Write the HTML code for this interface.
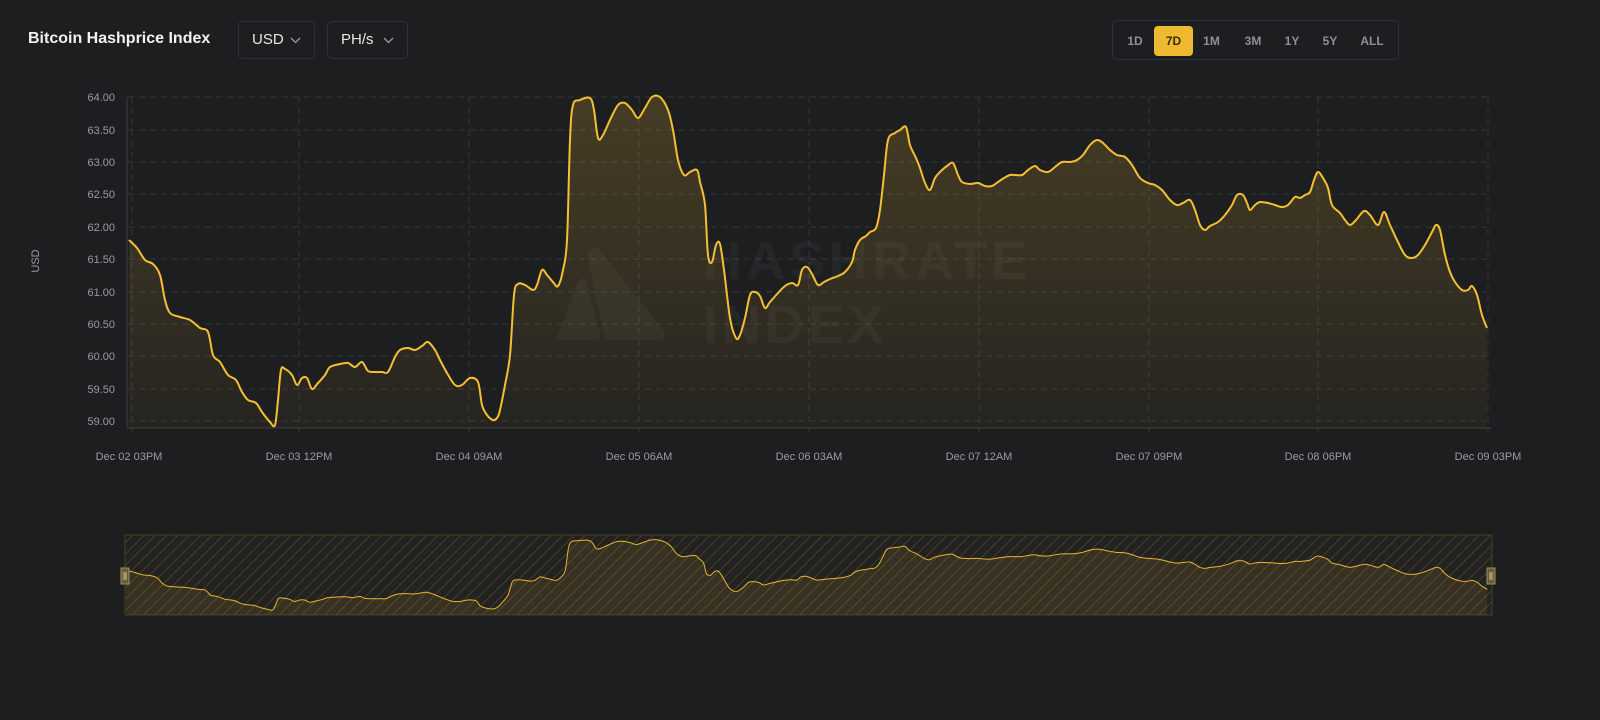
<!DOCTYPE html>
<html><head><meta charset="utf-8"><style>
body{margin:0;width:1600px;height:720px;background:#1d1e20;font-family:"Liberation Sans",sans-serif;overflow:hidden;position:relative;color:#fff}
.title{position:absolute;left:28px;top:30px;font-size:16px;font-weight:bold;color:#f2f2f2}
.dd{position:absolute;top:21px;height:38px;border:1px solid #303236;border-radius:5px;box-sizing:border-box;font-size:15px;color:#e6e6e6;line-height:36px;padding-left:13px}
.dd svg{position:absolute;top:15px}
.rng{position:absolute;left:1112px;top:20px;width:287px;height:40px;border:1px solid #303236;border-radius:5px;box-sizing:border-box}
.rng span{position:absolute;top:5px;height:30px;line-height:30px;font-size:12px;font-weight:bold;color:#8d9098;text-align:center}
.rng .on{background:#f0b932;color:#3a2d0a;border-radius:4px;width:39px}
</style></head><body>
<div class="title">Bitcoin Hashprice Index</div>
<div class="dd" style="left:238px;width:77px">USD<svg style="left:51px" width="11" height="7"><path d="M1 1l4.5 4.5L10 1" stroke="#9a9ca2" stroke-width="1.3" fill="none"/></svg></div>
<div class="dd" style="left:327px;width:81px">PH/s<svg style="left:55px" width="11" height="7"><path d="M1 1l4.5 4.5L10 1" stroke="#9a9ca2" stroke-width="1.3" fill="none"/></svg></div>
<div class="rng">
<span style="left:10px;width:24px">1D</span>
<span class="on" style="left:41px">7D</span>
<span style="left:86px;width:25px">1M</span>
<span style="left:126px;width:28px">3M</span>
<span style="left:168px;width:22px">1Y</span>
<span style="left:205px;width:24px">5Y</span>
<span style="left:244px;width:30px">ALL</span>
</div>
<svg width="1600" height="720" style="position:absolute;left:0;top:0" font-family="Liberation Sans, sans-serif">
<defs>
<linearGradient id="g" x1="0" y1="0" x2="0" y2="1"><stop offset="0" stop-color="#f0b932" stop-opacity="0.2"/><stop offset="1" stop-color="#f0b932" stop-opacity="0.04"/></linearGradient>
<pattern id="h" width="8" height="8" patternUnits="userSpaceOnUse" patternTransform="rotate(45)"><rect width="8" height="8" fill="#222"/><line x1="0" y1="0" x2="0" y2="8" stroke="#5e5028" stroke-width="1.2"/></pattern>
<path id="ln" d="M129,240 L137,248 L145,260 L153,264 L160,275 L165,300 L170,313 L180,317 L190,320 L200,328 L208,332 L213,355 L220,362 L228,375 L236,380 L242,392 L248,400 L256,403 L262,412 L270,422 L275,425 L278,400 L281,370 L285,369 L292,375 L297,385 L302,378 L307,378 L312,389 L318,383 L325,375 L330,367 L340,364 L348,363 L355,367 L362,362 L368,371 L375,372 L382,372 L388,372 L395,357 L400,350 L408,348 L415,350 L422,346 L428,342 L435,350 L440,360 L447,373 L455,385 L462,385 L470,378 L478,382 L482,405 L487,415 L493,420 L497,418 L500,410 L505,385 L510,355 L514,295 L518,284 L525,285 L533,290 L537,285 L542,270 L547,275 L553,282 L558,286 L563,270 L567,240 L570,140 L573,105 L580,100 L590,98 L594,110 L598,138 L603,135 L610,120 L618,105 L625,103 L632,110 L638,118 L645,108 L652,97 L660,97 L668,110 L673,130 L678,160 L684,175 L690,172 L697,170 L700,182 L705,205 L708,255 L712,262 L716,245 L720,244 L724,270 L730,318 L736,338 L740,335 L745,318 L750,295 L755,292 L760,296 L765,308 L770,302 L778,293 L785,286 L792,283 L798,285 L802,270 L807,267 L812,274 L818,285 L824,282 L830,279 L838,276 L845,272 L852,262 L855,250 L860,240 L866,236 L870,232 L876,228 L880,210 L884,175 L888,140 L895,133 L900,130 L906,127 L910,145 L916,158 L920,168 L925,183 L930,190 L935,178 L940,172 L947,166 L953,163 L958,175 L962,182 L970,184 L978,183 L985,186 L992,186 L998,182 L1004,178 L1010,175 L1015,175 L1022,175 L1028,170 L1035,166 L1040,170 L1048,172 L1055,167 L1062,162 L1070,162 L1077,160 L1083,155 L1090,145 L1097,140 L1103,143 L1110,150 L1117,155 L1125,157 L1132,165 L1140,178 L1148,183 L1155,185 L1162,190 L1170,200 L1177,205 L1183,203 L1190,200 L1195,210 L1200,225 L1205,230 L1210,226 L1218,222 L1225,215 L1232,205 L1237,195 L1243,195 L1247,203 L1250,210 L1255,205 L1260,202 L1268,203 L1275,205 L1282,207 L1288,205 L1295,197 L1300,198 L1305,195 L1310,192 L1314,180 L1318,172 L1323,178 L1328,188 L1332,205 L1340,213 L1345,220 L1350,225 L1356,220 L1364,211 L1370,215 L1378,225 L1384,212 L1390,225 L1397,240 L1405,255 L1412,258 L1418,255 L1425,245 L1432,232 L1436,225 L1440,230 L1445,255 L1450,272 L1455,282 L1462,290 L1468,290 L1472,286 L1477,295 L1482,315 L1487,328"/>
</defs>
<g stroke="#333538" stroke-dasharray="6 5" stroke-width="1">
<line x1="128" y1="97" x2="1490" y2="97"/><line x1="128" y1="130" x2="1490" y2="130"/><line x1="128" y1="162" x2="1490" y2="162"/><line x1="128" y1="194" x2="1490" y2="194"/><line x1="128" y1="227" x2="1490" y2="227"/><line x1="128" y1="259" x2="1490" y2="259"/><line x1="128" y1="292" x2="1490" y2="292"/><line x1="128" y1="324" x2="1490" y2="324"/><line x1="128" y1="356" x2="1490" y2="356"/><line x1="128" y1="389" x2="1490" y2="389"/><line x1="128" y1="421" x2="1490" y2="421"/>
<line x1="132" y1="97" x2="132" y2="434"/><line x1="299" y1="97" x2="299" y2="434"/><line x1="469" y1="97" x2="469" y2="434"/><line x1="639" y1="97" x2="639" y2="434"/><line x1="809" y1="97" x2="809" y2="434"/><line x1="979" y1="97" x2="979" y2="434"/><line x1="1149" y1="97" x2="1149" y2="434"/><line x1="1318" y1="97" x2="1318" y2="434"/><line x1="1488" y1="97" x2="1488" y2="434"/>
</g>
<line x1="127" y1="97" x2="127" y2="428" stroke="#3a3c40"/>
<line x1="127" y1="428" x2="1492" y2="428" stroke="#3a3c40"/>
<g fill="#9a9ca2" font-size="11" text-anchor="end">
<text x="115" y="101">64.00</text><text x="115" y="134">63.50</text><text x="115" y="166">63.00</text><text x="115" y="198">62.50</text><text x="115" y="231">62.00</text><text x="115" y="263">61.50</text><text x="115" y="296">61.00</text><text x="115" y="328">60.50</text><text x="115" y="360">60.00</text><text x="115" y="393">59.50</text><text x="115" y="425">59.00</text>
</g>
<text x="39" y="261" fill="#9a9ca2" font-size="11" transform="rotate(-90 39 261)" text-anchor="middle">USD</text>
<g fill="#9a9ca2" font-size="11" text-anchor="middle">
<text x="129" y="460">Dec 02 03PM</text><text x="299" y="460">Dec 03 12PM</text><text x="469" y="460">Dec 04 09AM</text><text x="639" y="460">Dec 05 06AM</text><text x="809" y="460">Dec 06 03AM</text><text x="979" y="460">Dec 07 12AM</text><text x="1149" y="460">Dec 07 09PM</text><text x="1318" y="460">Dec 08 06PM</text><text x="1488" y="460">Dec 09 03PM</text>
</g>
<g fill="#ffffff" fill-opacity="0.04">
<path d="M558,334 L578,282 Q582,274 586,282 L600,334 Q601,340 594,340 L563,340 Q556,340 558,334Z"/>
<path d="M587,256 Q590,244 600,250 L663,330 Q669,340 658,340 L612,340 Q606,340 604,334Z"/>
<text x="703" y="279" font-size="54" font-weight="bold" letter-spacing="4">HASHRATE</text>
<text x="703" y="343" font-size="54" font-weight="bold" letter-spacing="4">INDEX</text>
</g>
<path id="area" fill="url(#g)" d=""/>
<path id="line" fill="none" stroke="#f4bf33" stroke-width="2" stroke-linejoin="round" d=""/>
<rect x="125" y="535" width="1367" height="80" fill="url(#h)" stroke="#4a3f22"/>
<g id="mini" transform="translate(-3,519.3) scale(1.0022,0.2134)"></g>
<rect x="121" y="568" width="8" height="16" fill="#6b5a2a" stroke="#9a8f70"/>
<line x1="124" y1="572" x2="124" y2="580" stroke="#ccc"/><line x1="126" y1="572" x2="126" y2="580" stroke="#ccc"/>
<rect x="1487" y="568" width="8" height="16" fill="#6b5a2a" stroke="#9a8f70"/>
<line x1="1490" y1="572" x2="1490" y2="580" stroke="#ccc"/><line x1="1492" y1="572" x2="1492" y2="580" stroke="#ccc"/>
</svg>
<script>
var raw=document.getElementById('ln').getAttribute('d');
var pts=raw.replace(/[ML]/g,'').trim().split(/\s+/).map(function(s){return s.split(',').map(Number);});
var d='M'+pts[0][0]+','+pts[0][1];
for(var i=0;i<pts.length-1;i++){
 var p0=pts[i-1]||pts[i],p1=pts[i],p2=pts[i+1],p3=pts[i+2]||p2;
 var t=0.5/3;
 var c1x=p1[0]+(p2[0]-p0[0])*t,c1y=p1[1]+(p2[1]-p0[1])*t;
 var c2x=p2[0]-(p3[0]-p1[0])*t,c2y=p2[1]-(p3[1]-p1[1])*t;
 d+=' C'+c1x.toFixed(1)+','+c1y.toFixed(1)+' '+c2x.toFixed(1)+','+c2y.toFixed(1)+' '+p2[0]+','+p2[1];
}
var ns='http://www.w3.org/2000/svg';
document.getElementById('area').setAttribute('d',d+' L1487,428 L129,428 Z');
document.getElementById('line').setAttribute('d',d);
var m=document.getElementById('mini');
var p1=document.createElementNS(ns,'path');p1.setAttribute('d',d+' L1487,448 L129,448 Z');p1.setAttribute('fill','#f0b932');p1.setAttribute('fill-opacity','0.1');m.appendChild(p1);
var p2=document.createElementNS(ns,'path');p2.setAttribute('d',d);p2.setAttribute('fill','none');p2.setAttribute('stroke','#e9b430');p2.setAttribute('stroke-width','1');p2.setAttribute('vector-effect','non-scaling-stroke');m.appendChild(p2);
</script>
</body></html>
